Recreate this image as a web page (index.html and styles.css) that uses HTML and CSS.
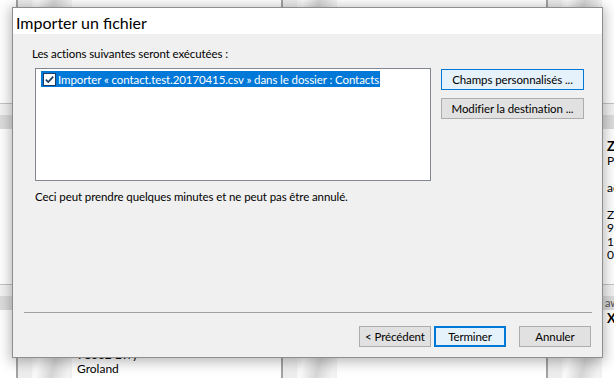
FILE: index.html
```html
<!DOCTYPE html>
<html lang="fr">
  <head>
    <meta charset="UTF-8" />
    <meta name="viewport" content="width=device-width, initial-scale=1.0" />
    <title>Importer un fichier</title>
    <link rel="stylesheet" href="styles.css">
  </head>
  <body>
    <div class="app">
      <div class="cards">
        <div class="col">
          <div class="card row-a">
            <div class="photo"></div>
            <div class="info"></div>
          </div>
          <div class="foot"><span></span></div>
          <div class="card">
            <div class="photo"></div>
            <div class="info"></div>
          </div>
          <div class="foot"><span></span></div>
          <div class="card">
            <div class="photo"></div>
            <div class="info"></div>
          </div>
        </div>
        <div class="col">
          <div class="card row-a">
            <div class="photo"></div>
            <div class="info"></div>
          </div>
          <div class="foot"><span></span></div>
          <div class="card">
            <div class="photo"></div>
            <div class="info"></div>
          </div>
          <div class="foot"><span></span></div>
          <div class="card">
            <div class="photo"></div>
            <div class="info low">
              <div class="name">Durand Paul</div>
              <div>Ingénieur</div>
              <div>91002 Évry</div>
              <div>Groland</div>
            </div>
          </div>
        </div>
        <div class="col">
          <div class="card row-a">
            <div class="photo"></div>
            <div class="info"></div>
          </div>
          <div class="foot"><span></span></div>
          <div class="card">
            <div class="photo"></div>
            <div class="info"></div>
          </div>
          <div class="foot"><span></span></div>
          <div class="card">
            <div class="photo"></div>
            <div class="info"></div>
          </div>
        </div>
        <div class="col">
          <div class="card row-a">
            <div class="photo"></div>
            <div class="info"></div>
          </div>
          <div class="foot"><span></span></div>
          <div class="card">
            <div class="photo"></div>
            <div class="info mid">
              <div class="name">Zo</div>
              <div>Pr</div>
              <div>&nbsp;</div>
              <div>ad</div>
              <div>&nbsp;</div>
              <div>Zo</div>
              <div>91</div>
              <div>14</div>
              <div>01</div>
            </div>
          </div>
          <div class="foot"><span>aw</span></div>
          <div class="card">
            <div class="photo"></div>
            <div class="info top">
              <div class="name">Xa</div>
            </div>
          </div>
        </div>
      </div>

      <div class="dialog">
        <div class="titlebar">Importer un fichier</div>
        <div class="content">
          <div class="label">Les actions suivantes seront exécutées :</div>
          <div class="main">
            <div class="listbox">
              <div class="item">
                <span class="check">
                  <svg width="13" height="13" viewBox="0 0 13 13">
                    <rect x="0.5" y="0.5" width="12" height="12" fill="#fff" stroke="#1c3d66" />
                    <path d="M2.8 6.6 L5.3 9.1 L10.2 3.6" fill="none" stroke="#1c3d66" stroke-width="1.7" />
                  </svg>
                </span>
                <span class="item-text">Importer « contact.test.20170415.csv » dans le dossier : Contacts</span>
              </div>
            </div>
            <div class="side-buttons">
              <button class="btn focus">Champs personnalisés ...</button>
              <button class="btn">Modifier la destination ...</button>
            </div>
          </div>
          <div class="note">Ceci peut prendre quelques minutes et ne peut pas être annulé.</div>
          <div class="spacer"></div>
          <div class="separator"></div>
          <div class="footer">
            <button class="btn small">&lt; Précédent</button>
            <button class="btn small default">Terminer</button>
            <button class="btn small cancel">Annuler</button>
          </div>
        </div>
      </div>
    </div>
  </body>
</html>
```

FILE: styles.css
```css
* {
  margin: 0;
  padding: 0;
  box-sizing: border-box;
}
body {
  font-family: Lato, "Noto Sans", sans-serif;
  font-size: 11.5px;
  letter-spacing: -0.1px;
  color: #000;
}
.app {
  position: relative;
  width: 614px;
  height: 378px;
  overflow: hidden;
  background-color: #ededed;
}

/* contact cards behind the dialog */
.cards {
  display: flex;
  gap: 14px;
  margin-left: -233px;
  margin-top: -52px;
}
.col {
  width: 251px;
  flex-shrink: 0;
  display: flex;
  flex-direction: column;
  border-right: 2px solid #a3a3a3;
}
.card {
  height: 155px;
  display: flex;
  background-color: #fff;
}
.photo {
  width: 40px;
  flex-shrink: 0;
  background: linear-gradient(105deg, #e2e2e2 0%, #fafafa 25%, #d6d6d6 45%, #f4f4f4 65%, #dedede 100%);
}
.info {
  padding-left: 5px;
  line-height: 13.5px;
  font-size: 12px;
  letter-spacing: 0;
  white-space: nowrap;
}
.info .name {
  font-weight: bold;
  font-size: 13px;
  line-height: 13.5px;
}
.info.mid {
  padding-top: 11px;
}
.info.top {
  padding-top: 2px;
}
.info.low {
  padding-top: 10px;
}
.info.low .name {
  margin-bottom: 1px;
}
.foot {
  height: 26px;
  border-top: 1px solid #c4c4c4;
  background-color: #f3f3f3;
  display: flex;
  flex-direction: column;
  justify-content: flex-end;
}
.foot span {
  display: block;
  height: 14px;
  padding-left: 43px;
  line-height: 14px;
  font-size: 11px;
  color: #555;
  background-color: #dcdcdc;
  white-space: nowrap;
}

/* dialog window */
.dialog {
  position: absolute;
  left: 12px;
  top: 7px;
  width: 591px;
  height: 351px;
  border: 1px solid #8e8e8e;
  background-color: #f0f0f0;
  box-shadow: 0 2px 12px 2px rgba(0, 0, 0, 0.28);
  display: flex;
  flex-direction: column;
}
.titlebar {
  height: 26px;
  background-color: #fff;
  padding: 3px 0 0 3px;
  font-size: 16px;
  letter-spacing: 0;
  line-height: 23px;
}
.content {
  flex: 1;
  display: flex;
  flex-direction: column;
}
.label {
  margin: 12px 0 0 19px;
  line-height: 15px;
}
.main {
  display: flex;
  margin: 7px 0 0 22px;
}
.listbox {
  width: 396px;
  height: 113px;
  border: 1px solid #828790;
  background-color: #fff;
  padding: 2px 0 0 5px;
}
.item {
  display: inline-flex;
  align-items: center;
  height: 16px;
  padding: 0 1px 0 2px;
  background-color: #0078d7;
  color: #fff;
  white-space: nowrap;
}
.check {
  display: flex;
  width: 13px;
  height: 13px;
  margin-right: 2px;
}
.side-buttons {
  display: flex;
  flex-direction: column;
  gap: 8px;
  margin: 1px 0 0 10px;
}
.btn {
  width: 143px;
  height: 21px;
  font-family: inherit;
  font-size: 11.5px;
  letter-spacing: -0.1px;
  color: #000;
  background-color: #e1e1e1;
  border: 1px solid #adadad;
}
.btn.focus {
  background-color: #e5f1fb;
  border-color: #0078d7;
}
.note {
  margin: 8px 0 0 22px;
  line-height: 15px;
}
.spacer {
  flex: 1;
}
.separator {
  height: 1px;
  margin: 0 10px 0 11px;
  background-color: #a0a0a0;
}
.footer {
  display: flex;
  justify-content: flex-end;
  gap: 3px;
  margin: 13px 11px 10px 0;
}
.btn.small {
  width: 72px;
}
.btn.default {
  background-color: #e5f1fb;
  border: 2px solid #0078d7;
}
.btn.cancel {
  margin-left: 10px;
}
```
